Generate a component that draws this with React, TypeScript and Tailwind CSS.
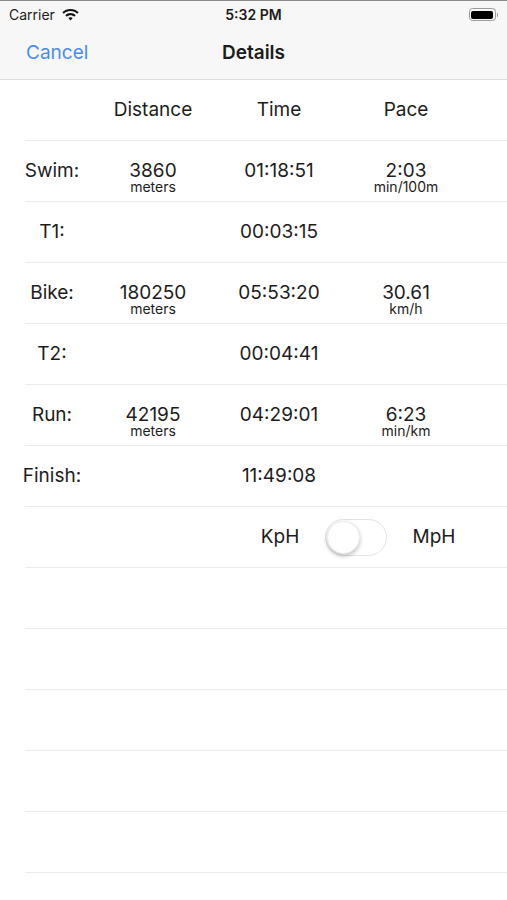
import React from "react";

type Row = {
  label: string;
  dist?: string;
  time?: string;
  pace?: string;
  paceUnit?: string;
};

const rows: Row[] = [
  { label: "Swim:", dist: "3860", time: "01:18:51", pace: "2:03", paceUnit: "min/100m" },
  { label: "T1:", time: "00:03:15" },
  { label: "Bike:", dist: "180250", time: "05:53:20", pace: "30.61", paceUnit: "km/h" },
  { label: "T2:", time: "00:04:41" },
  { label: "Run:", dist: "42195", time: "04:29:01", pace: "6:23", paceUnit: "min/km" },
  { label: "Finish:", time: "11:49:08" },
];

function Value({ value, unit }: { value?: string; unit?: string }) {
  if (!value) return null;
  if (!unit) return <span className="leading-[20px]">{value}</span>;
  return (
    <div className="flex flex-col items-center pt-[14px]">
      <span className="leading-[18px]">{value}</span>
      <span className="text-[14px] leading-[14px]">{unit}</span>
    </div>
  );
}

function Wifi() {
  return (
    <svg width="17" height="12" viewBox="0 0 17 12">
      <path d="M8.5 0C5.3 0 2.4 1.2 0.3 3.3L1.8 4.8C3.5 3.1 5.9 2.1 8.5 2.1s5 1 6.7 2.7l1.5-1.5C14.6 1.2 11.7 0 8.5 0z" fill="#111" />
      <path d="M8.5 4.1c-2 0-3.9 0.8-5.2 2.1l1.5 1.5c1-1 2.3-1.5 3.7-1.5s2.7 0.5 3.7 1.5l1.5-1.5C12.4 4.9 10.5 4.1 8.5 4.1z" fill="#111" />
      <path d="M8.5 8.2c-0.9 0-1.6 0.3-2.2 0.9L8.5 11.4l2.2-2.3C10.1 8.5 9.4 8.2 8.5 8.2z" fill="#111" />
    </svg>
  );
}

function Battery() {
  return (
    <div className="flex items-center">
      <div className="w-[27px] h-[13px] rounded-[3.5px] border border-[#9a9a9a] p-[1.5px]">
        <div className="w-full h-full rounded-[2px] bg-black" />
      </div>
      <div className="w-[1.5px] h-[4px] bg-[#9a9a9a] rounded-r-sm ml-[1px]" />
    </div>
  );
}

export default function App() {
  return (
    <div
      className="w-[507px] h-[900px] bg-white text-[#1c1c1c] overflow-hidden"
      style={{ fontFamily: 'Inter, "Liberation Sans", Arial, sans-serif' }}
    >
      <div className="bg-[#f7f7f7] border-t border-[#8a8a8a] border-b border-b-[#dedede] h-[80px] flex flex-col">
        <div className="h-[27px] flex items-center px-[9px] relative">
          <div className="flex items-center gap-[7px] text-[14px]">
            <span>Carrier</span>
            <Wifi />
          </div>
          <div className="absolute left-0 right-0 text-center text-[14px] font-semibold pointer-events-none">5:32 PM</div>
          <div className="ml-auto">
            <Battery />
          </div>
        </div>
        <div className="flex-1 flex items-center relative pb-[1px]">
          <span className="ml-[26px] text-[19px] text-[#4b8cf4]">Cancel</span>
          <span className="absolute left-0 right-0 text-center text-[19px] font-semibold">Details</span>
        </div>
      </div>

      <div className="flex h-[61px] items-center text-[19px] ml-[25px] border-b border-[#ebebeb]">
        <div className="w-[79px]" />
        <div className="w-[98px] text-center">Distance</div>
        <div className="w-[154px] text-center">Time</div>
        <div className="w-[100px] text-center">Pace</div>
      </div>

      {rows.map((r) => (
        <div key={r.label} className="flex h-[61px] items-center text-[19px] border-b border-[#ebebeb] ml-[25px]">
          <div className="w-[104px] -ml-[25px] text-center">{r.label}</div>
          <div className="w-[98px] flex justify-center">
            <Value value={r.dist} unit={r.dist ? "meters" : undefined} />
          </div>
          <div className="w-[154px] flex justify-center">
            <Value value={r.time} />
          </div>
          <div className="w-[100px] flex justify-center">
            <Value value={r.pace} unit={r.paceUnit} />
          </div>
        </div>
      ))}

      <div className="flex h-[61px] items-center text-[19px] border-b border-[#ebebeb] ml-[25px]">
        <div className="w-[231px]" />
        <span className="w-[48px] text-center">KpH</span>
        <div className="ml-[21px] w-[62px] h-[37px] rounded-full border border-[#e3e3e3] bg-white relative">
          <div className="absolute left-[1px] top-[1px] w-[33px] h-[33px] rounded-full bg-white shadow-[0_2px_4px_rgba(0,0,0,0.25)] border border-[#ededed]" />
        </div>
        <span className="ml-[22px] w-[50px] text-center">MpH</span>
      </div>

      {[0, 1, 2, 3, 4].map((i) => (
        <div key={i} className="h-[61px] border-b border-[#ebebeb] ml-[25px]" />
      ))}
    </div>
  );
}
